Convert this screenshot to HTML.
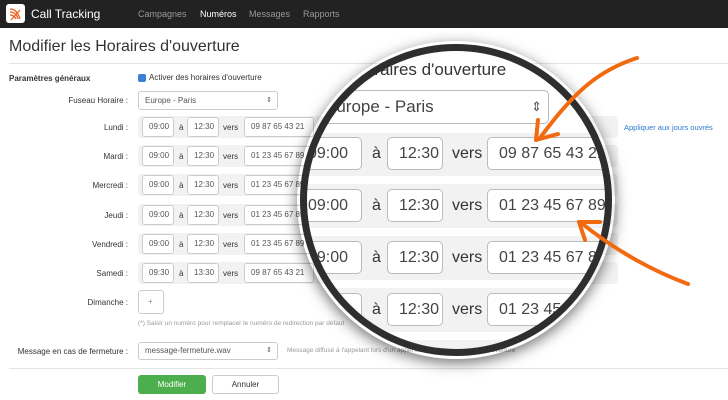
<!DOCTYPE html>
<html><head><meta charset="utf-8"><style>
*{margin:0;padding:0;box-sizing:border-box}
body{width:728px;height:400px;overflow:hidden;background:#fff;font-family:"Liberation Sans",sans-serif;color:#333;position:relative}
.a{position:absolute;white-space:nowrap}
.nav{left:0;top:0;width:728px;height:28px;background:#222}
.in{position:absolute;border:1px solid #ccc;border-radius:3px;background:#fff;color:#555;font-size:8px;padding-left:6px;line-height:18px;height:20px;overflow:hidden;white-space:nowrap}
.band{position:absolute;background:#f2f2f2;border-radius:3px}
.lbl{position:absolute;font-size:8px;color:#333;text-align:right;width:128px;left:0}
.sm{font-size:8px}
.M .in{font-size:16px;line-height:31px;height:33px;padding-left:11px;border-radius:5px;border-color:#bbb;color:#444}
.M .t{position:absolute;font-size:16px;color:#333}
</style></head><body>
<div class="a nav"></div>
<div class="a" style="left:6px;top:4px;width:19px;height:19px;background:#fff;border-radius:3px"></div>
<svg class="a" style="left:6px;top:4px" width="19" height="19"><path d="M4 5 Q11 5 14 15 M4 8 Q10 8 12 15 M4 11 Q8 11 10 15 M5 16 L14 6" stroke="#f05a1a" stroke-width="1.3" fill="none"/></svg>
<div class="a" style="left:31px;top:7px;color:#fff;font-size:12px">Call Tracking</div>
<div class="a" style="left:138px;top:9px;color:#999;font-size:9px">Campagnes</div>
<div class="a" style="left:200px;top:9px;color:#fff;font-size:9px">Numéros</div>
<div class="a" style="left:249px;top:9px;color:#999;font-size:9px">Messages</div>
<div class="a" style="left:303px;top:9px;color:#999;font-size:9px">Rapports</div>
<div class="a" style="left:9px;top:38px;font-size:16px;color:#333">Modifier les Horaires d'ouverture</div>
<div class="a" style="left:9px;top:63px;width:719px;height:1px;background:#e5e5e5"></div>
<div class="a" style="left:9px;top:74px;font-size:8px;font-weight:bold">Paramètres généraux</div>
<div class="a" style="left:138px;top:74px;width:8px;height:8px;background:#3b82d6;border-radius:2px"></div>
<div class="a" style="left:149px;top:73px;font-size:8px">Activer des horaires d'ouverture</div>
<div class="lbl" style="top:96px">Fuseau Horaire :</div>
<div class="in" style="left:138px;top:91px;width:140px;height:19px;line-height:17px">Europe - Paris<span style="position:absolute;right:5px;font-size:7px">⇕</span></div>

<div class="band" style="left:138px;top:116px;width:480px;height:22px"></div>
<div class="band" style="left:138px;top:145px;width:480px;height:22px"></div>
<div class="band" style="left:138px;top:174px;width:480px;height:22px"></div>
<div class="band" style="left:138px;top:204px;width:480px;height:22px"></div>
<div class="band" style="left:138px;top:233px;width:480px;height:22px"></div>
<div class="band" style="left:138px;top:262px;width:480px;height:22px"></div>

<div class="lbl" style="top:123px">Lundi :</div>
<div class="lbl" style="top:152px">Mardi :</div>
<div class="lbl" style="top:181px">Mercredi :</div>
<div class="lbl" style="top:211px">Jeudi :</div>
<div class="lbl" style="top:240px">Vendredi :</div>
<div class="lbl" style="top:269px">Samedi :</div>
<div class="lbl" style="top:298px">Dimanche :</div>

<div class="in" style="left:142px;top:117px;width:32px">09:00</div><div class="a sm" style="left:179px;top:123px">à</div><div class="in" style="left:187px;top:117px;width:32px">12:30</div><div class="a sm" style="left:223px;top:123px">vers</div><div class="in" style="left:244px;top:117px;width:70px">09 87 65 43 21</div>
<div class="in" style="left:142px;top:146px;width:32px">09:00</div><div class="a sm" style="left:179px;top:152px">à</div><div class="in" style="left:187px;top:146px;width:32px">12:30</div><div class="a sm" style="left:223px;top:152px">vers</div><div class="in" style="left:244px;top:146px;width:70px">01 23 45 67 89</div>
<div class="in" style="left:142px;top:175px;width:32px">09:00</div><div class="a sm" style="left:179px;top:181px">à</div><div class="in" style="left:187px;top:175px;width:32px">12:30</div><div class="a sm" style="left:223px;top:181px">vers</div><div class="in" style="left:244px;top:175px;width:70px">01 23 45 67 89</div>
<div class="in" style="left:142px;top:205px;width:32px">09:00</div><div class="a sm" style="left:179px;top:211px">à</div><div class="in" style="left:187px;top:205px;width:32px">12:30</div><div class="a sm" style="left:223px;top:211px">vers</div><div class="in" style="left:244px;top:205px;width:70px">01 23 45 67 89</div>
<div class="in" style="left:142px;top:234px;width:32px">09:00</div><div class="a sm" style="left:179px;top:240px">à</div><div class="in" style="left:187px;top:234px;width:32px">12:30</div><div class="a sm" style="left:223px;top:240px">vers</div><div class="in" style="left:244px;top:234px;width:70px">01 23 45 67 89</div>
<div class="in" style="left:142px;top:263px;width:32px">09:30</div><div class="a sm" style="left:179px;top:269px">à</div><div class="in" style="left:187px;top:263px;width:32px">13:30</div><div class="a sm" style="left:223px;top:269px">vers</div><div class="in" style="left:244px;top:263px;width:70px">09 87 65 43 21</div>
<div class="in" style="left:138px;top:290px;width:26px;height:24px;line-height:22px;padding-left:9px;color:#888">+</div>
<div class="a" style="left:138px;top:320px;font-size:6.5px;color:#999">(*) Saisir un numéro pour remplacer le numéro de redirection par défaut</div>
<div class="a" style="left:624px;top:123px;font-size:7.5px;color:#2a7ad0">Appliquer aux jours ouvrés</div>
<div class="lbl" style="top:347px">Message en cas de fermeture :</div>
<div class="in" style="left:138px;top:342px;width:140px;height:18px;line-height:16px">message-fermeture.wav<span style="position:absolute;right:5px;font-size:7px">⇕</span></div>
<div class="a" style="left:287px;top:347px;font-size:6.5px;color:#999">Message diffusé à l'appelant lors d'un appel en dehors des horaires d'ouverture</div>
<div class="a" style="left:9px;top:368px;width:719px;height:1px;background:#e5e5e5"></div>
<div class="a" style="left:138px;top:375px;width:68px;height:19px;background:#4cae4c;border-radius:3px;color:#fff;font-size:8px;text-align:center;line-height:19px">Modifier</div>
<div class="a" style="left:212px;top:375px;width:67px;height:19px;border:1px solid #ccc;border-radius:3px;font-size:8px;text-align:center;line-height:17px">Annuler</div>

<div class="a" style="left:297px;top:41px;width:318px;height:318px;border-radius:50%;box-shadow:0 4px 14px rgba(0,0,0,.55)"></div>
<div class="a M" style="left:0;top:0;width:728px;height:400px;background:#fff;clip-path:circle(153px at 456px 200px)">
 <div class="t" style="left:330px;top:60px;font-size:17px">es Horaires d'ouverture</div>
 <div class="in" style="left:280px;top:90px;width:269px;height:34px;line-height:32px;font-size:17px;padding-left:44px">Europe - Paris<span style="position:absolute;right:6px;font-size:13px;color:#555">⇕</span></div>
 <div class="band" style="left:290px;top:133px;width:330px;height:43px"></div>
 <div class="band" style="left:290px;top:184px;width:330px;height:44px"></div>
 <div class="band" style="left:290px;top:236px;width:330px;height:44px"></div>
 <div class="band" style="left:290px;top:288px;width:330px;height:44px"></div>
 <div class="band" style="left:290px;top:340px;width:330px;height:44px"></div>
 <div class="in" style="left:296px;top:137px;width:66px">09:00</div><div class="t" style="left:372px;top:145px">à</div><div class="in" style="left:387px;top:137px;width:56px">12:30</div><div class="t" style="left:452px;top:145px">vers</div><div class="in" style="left:487px;top:137px;width:130px">09 87 65 43 21</div>
 <div class="in" style="left:296px;top:189px;width:66px">09:00</div><div class="t" style="left:372px;top:197px">à</div><div class="in" style="left:387px;top:189px;width:56px">12:30</div><div class="t" style="left:452px;top:197px">vers</div><div class="in" style="left:487px;top:189px;width:130px">01 23 45 67 89</div>
 <div class="in" style="left:296px;top:241px;width:66px">09:00</div><div class="t" style="left:372px;top:249px">à</div><div class="in" style="left:387px;top:241px;width:56px">12:30</div><div class="t" style="left:452px;top:249px">vers</div><div class="in" style="left:487px;top:241px;width:130px">01 23 45 67 89</div>
 <div class="in" style="left:296px;top:293px;width:66px">09:00</div><div class="t" style="left:372px;top:301px">à</div><div class="in" style="left:387px;top:293px;width:56px">12:30</div><div class="t" style="left:452px;top:301px">vers</div><div class="in" style="left:487px;top:293px;width:130px">01 23 45 67 89</div>
</div>
<div class="a" style="left:300px;top:44px;width:312px;height:312px;border-radius:50%;border:7px solid #2e2e2e"></div>
<svg class="a" style="left:0;top:0" width="728" height="400">
 <path d="M637 58 C600 70 575 90 540 138" stroke="#f26a0f" stroke-width="4" fill="none" stroke-linecap="round"/>
 <path d="M538 120 L536 140 L558 134" stroke="#f26a0f" stroke-width="4" fill="none" stroke-linecap="round" stroke-linejoin="round"/>
 <path d="M688 284 C650 270 615 250 580 222" stroke="#f26a0f" stroke-width="4" fill="none" stroke-linecap="round"/>
 <path d="M600 222 L579 222 L585 240" stroke="#f26a0f" stroke-width="4" fill="none" stroke-linecap="round" stroke-linejoin="round"/>
</svg>
</body></html>
